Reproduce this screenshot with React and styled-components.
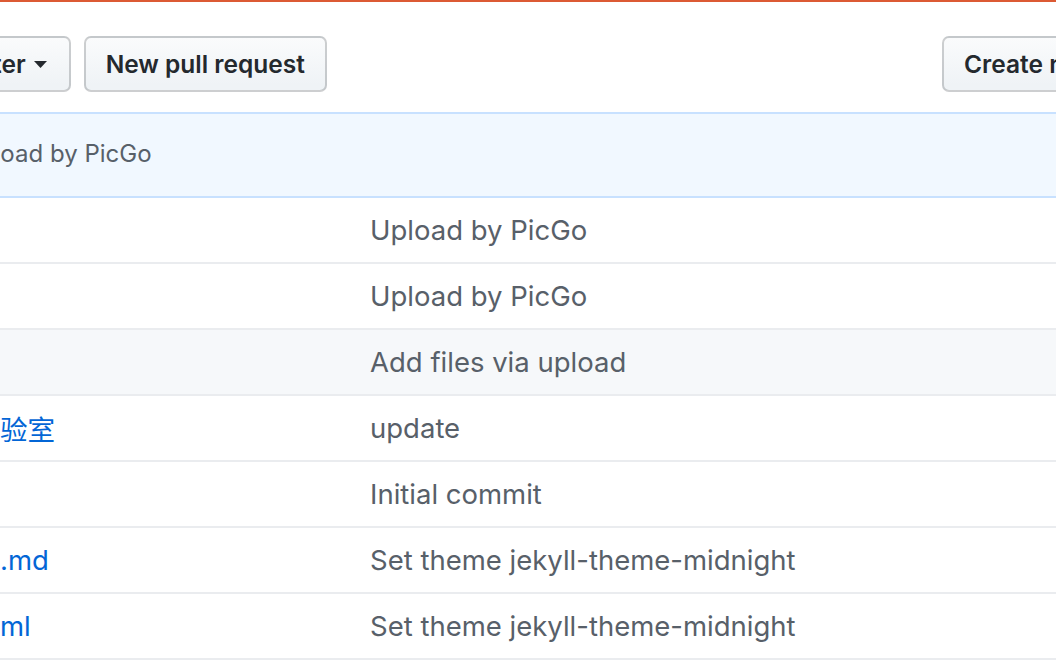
import styled, { createGlobalStyle } from "styled-components";

const GlobalStyle = createGlobalStyle`
  html, body {
    margin: 0;
    padding: 0;
    background: #ffffff;
  }
  body {
    font-family: Inter, "Noto Sans CJK SC", "Liberation Sans", sans-serif;
    -webkit-font-smoothing: antialiased;
  }
`;

const Page = styled.div`
  width: 1056px;
  height: 664px;
  overflow: hidden;
  box-sizing: border-box;
  border-top: 2px solid #dc5a34;
`;

const Toolbar = styled.div`
  display: flex;
  align-items: center;
  gap: 13px;
  padding-top: 34px;
  margin-right: -108px;
`;

const Spacer = styled.div`
  flex: 1;
`;

const Button = styled.button`
  display: flex;
  align-items: center;
  gap: 8px;
  height: 56px;
  box-sizing: border-box;
  padding: 0 20px;
  border: 2px solid rgba(27, 31, 35, 0.2);
  border-radius: 7px;
  background: linear-gradient(-180deg, #fafbfc 0%, #eff3f6 90%);
  color: #24292e;
  font-family: inherit;
  font-size: 24.5px;
  font-weight: 600;
  white-space: nowrap;
  cursor: pointer;

  &.branch {
    margin-left: -7px;
    padding-left: 0;
    padding-right: 22px;
    border-left: none;
    border-radius: 0 7px 7px 0;
  }
`;

const Caret = () => (
  <svg width="13" height="7" viewBox="0 0 13 7">
    <path d="M0 0h13L6.5 7z" fill="#24292e" />
  </svg>
);

const FileTable = styled.div`
  margin-top: 20px;
`;

const CommitTease = styled.div`
  display: flex;
  align-items: center;
  height: 86px;
  box-sizing: border-box;
  border-top: 2px solid #c8e1ff;
  border-bottom: 2px solid #c8e1ff;
  background: #f1f8ff;
  color: #586069;
  font-size: 24px;
  padding-bottom: 4px;
  white-space: nowrap;
`;

const TeaseText = styled.span`
  margin-left: -38px;
`;

const Row = styled.div`
  display: grid;
  grid-template-columns: 370px 1fr;
  align-items: center;
  height: 66px;
  box-sizing: border-box;
  border-bottom: 2px solid #eaecef;
  background: ${(p) => (p.$hover ? "#f6f8fa" : "#ffffff")};
  font-size: 27.5px;
`;

const FileName = styled.a`
  color: #0366d6;
  text-decoration: none;
  white-space: nowrap;
`;

const Message = styled.span`
  color: #586069;
  white-space: nowrap;
`;

const files = [
  { name: "", msg: "Upload by PicGo" },
  { name: "", msg: "Upload by PicGo" },
  { name: "", msg: "Add files via upload", hover: true },
  { name: "验室", msg: "update" },
  { name: "", msg: "Initial commit" },
  { name: ".md", msg: "Set theme jekyll-theme-midnight" },
  { name: "ml", msg: "Set theme jekyll-theme-midnight" },
];

export default function App() {
  return (
    <Page>
      <GlobalStyle />
      <Toolbar>
        <Button className="branch">
          ter
          <Caret />
        </Button>
        <Button>New pull request</Button>
        <Spacer />
        <Button>Create new file</Button>
      </Toolbar>
      <FileTable>
        <CommitTease>
          <TeaseText>Upload by PicGo</TeaseText>
        </CommitTease>
        {files.map((f, i) => (
          <Row key={i} $hover={f.hover}>
            <FileName href="#">{f.name}</FileName>
            <Message>{f.msg}</Message>
          </Row>
        ))}
      </FileTable>
    </Page>
  );
}
